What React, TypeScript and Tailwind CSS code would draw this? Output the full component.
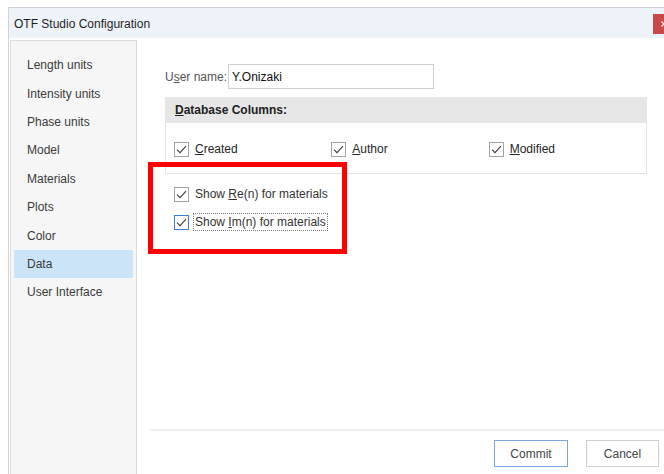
import type { ReactNode } from 'react';

const sections = [
  'Length units',
  'Intensity units',
  'Phase units',
  'Model',
  'Materials',
  'Plots',
  'Color',
  'Data',
  'User Interface',
];

const font = { fontFamily: '"Liberation Sans", Arial, sans-serif' };

function CheckBox({ focused = false }: { focused?: boolean }) {
  return (
    <span
      className={`flex h-[15px] w-[15px] shrink-0 items-center justify-center border bg-white ${
        focused ? 'border-[#3b7fd4]' : 'border-[#a3a3a3]'
      }`}
    >
      <svg width="11" height="9" viewBox="0 0 11 9" fill="none">
        <path d="M1 4.6 L4 7.6 L10 1.2" stroke="#3a3a3a" strokeWidth="1.1" />
      </svg>
    </span>
  );
}

function Check({ children, focused = false }: { children: ReactNode; focused?: boolean }) {
  return (
    <div className="flex items-center">
      <CheckBox focused={focused} />
      <span
        className={`ml-[4px] px-[1px] leading-[16px] ${
          focused ? 'border border-dotted border-[#777]' : 'border border-transparent'
        }`}
      >
        {children}
      </span>
    </div>
  );
}

export default function App() {
  return (
    <div className="relative h-[474px] w-[664px] overflow-hidden bg-white text-[12px] text-[#262626]" style={font}>
      <div className="ml-[8px] mt-[7px] w-[691px] border-l border-t border-[#cfd4dc]">
        {/* title bar */}
        <div className="flex h-[30px] bg-[#eef2f9]">
          <span className="ml-[5px] mt-[7px] text-[#1f1f1f]">OTF Studio Configuration</span>
          <button className="ml-auto mt-[6px] flex h-[20px] w-[46px] items-center justify-start bg-[#c8494a] pl-[8px]">
            <svg width="6" height="6" viewBox="0 0 6 6" stroke="white" strokeWidth="1.2">
              <path d="M0.5 0.5 L5.5 5.5 M5.5 0.5 L0.5 5.5" />
            </svg>
          </button>
        </div>

        <div className="flex h-[440px]">
          {/* section list */}
          <nav className="ml-[1px] mt-[2px] w-[127px] border border-[#dcdcdc] bg-[#f6f6f6] px-[3px] pt-[10px]">
            {sections.map((s) => (
              <div
                key={s}
                className={`flex h-[28.4px] items-center pl-[13px] text-[#3a3a3a] ${
                  s === 'Data' ? 'bg-[#cce4f7]' : ''
                }`}
              >
                {s}
              </div>
            ))}
          </nav>

          {/* settings panel */}
          <div className="flex flex-1 flex-col pl-[13px]">
            <div className="ml-[15px] mt-[26px] flex items-center">
              <span className="w-[63px] text-[#555]">
                U<span className="underline">s</span>er name:
              </span>
              <div className="flex h-[25px] w-[206px] items-center border border-[#d0d0d0] px-[3px] text-[#111]">
                Y.Onizaki
              </div>
            </div>

            <div className="ml-[15px] mt-[8px] w-[482px]">
              <div className="flex h-[26px] items-center bg-[#e6e6e6] pl-[10px] font-bold text-[#222]">
                <span className="underline">D</span>atabase Columns:
              </div>
              <div className="grid h-[51px] grid-cols-3 items-center border border-t-0 border-[#e4e4e4] pl-[8px] pt-[2px]">
                <Check>
                  <span className="underline">C</span>reated
                </Check>
                <Check>
                  <span className="underline">A</span>uthor
                </Check>
                <Check>
                  <span className="underline">M</span>odified
                </Check>
              </div>
            </div>

            <div className="ml-[24px] mt-[11px] flex flex-col gap-[10px] text-[#333]">
              <Check>
                Show <span className="underline">R</span>e(n) for materials
              </Check>
              <Check focused>
                Show <span className="underline">I</span>m(n) for materials
              </Check>
            </div>

            <div className="mb-[11px] mt-auto">
              <div className="h-[2px] bg-[#efefef]" />
              <div className="mt-[9px] flex gap-[18px] pl-[344px]">
                <button className="h-[27px] w-[74px] border border-[#7aa8dc] bg-white text-[#444]">Commit</button>
                <button className="h-[27px] w-[73px] border border-[#cfcfcf] bg-white text-[#444]">Cancel</button>
              </div>
            </div>
          </div>
        </div>
      </div>

      {/* annotation frame */}
      <div className="absolute left-[148px] top-[162px] h-[92px] w-[199px] border-[5px] border-[#ff0000]" />
    </div>
  );
}
